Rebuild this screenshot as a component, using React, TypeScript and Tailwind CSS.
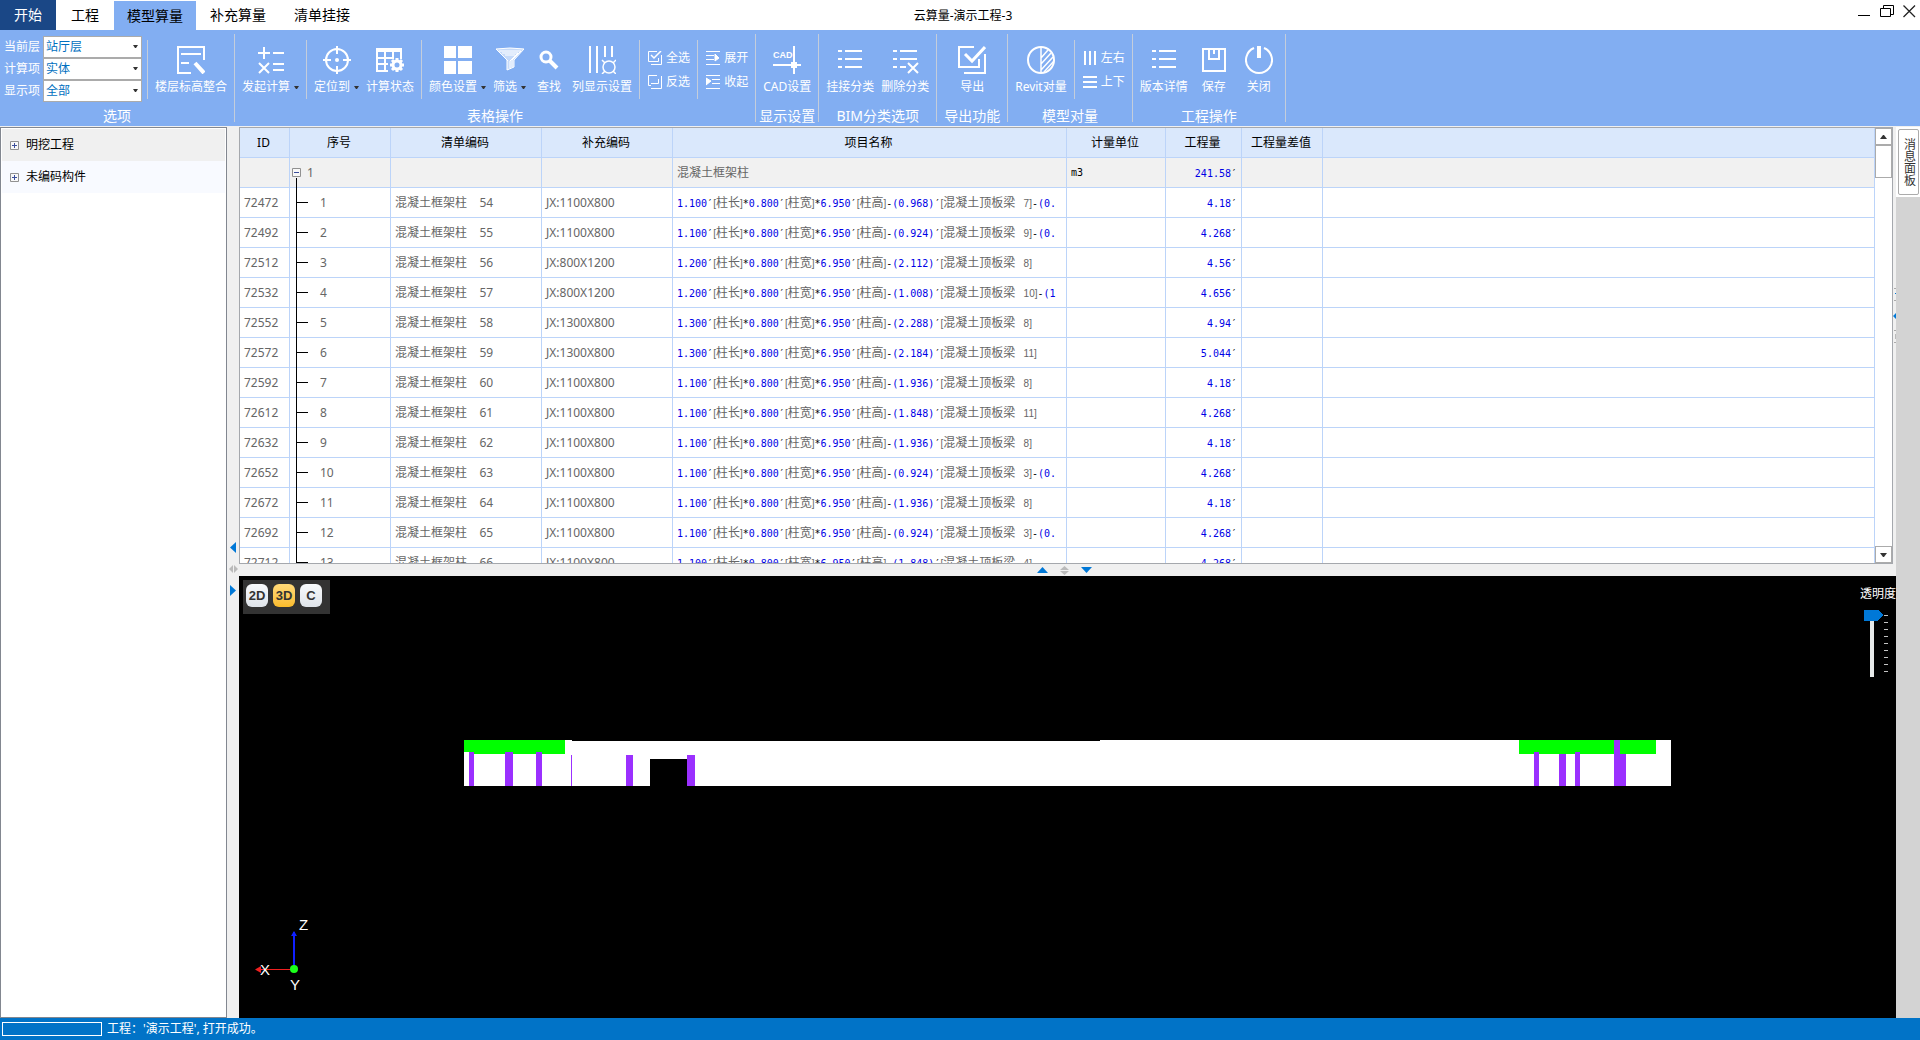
import React, { useState } from 'react';

const pisos = ['站厅层', '站台层', '顶层'];
const calculos = ['实体', '模板'];
const vistas = ['全部', '已选'];

const filas = [
  { id: '72472', n: 1, cod: 54, extra: 'JX:1100X800', f: "1.100′[柱长]*0.800′[柱宽]*6.950′[柱高]-(0.968)′[混凝土顶板梁   7]-(0.", cant: '4.18' },
  { id: '72492', n: 2, cod: 55, extra: 'JX:1100X800', f: "1.100′[柱长]*0.800′[柱宽]*6.950′[柱高]-(0.924)′[混凝土顶板梁   9]-(0.", cant: '4.268' },
  { id: '72512', n: 3, cod: 56, extra: 'JX:800X1200', f: "1.200′[柱长]*0.800′[柱宽]*6.950′[柱高]-(2.112)′[混凝土顶板梁   8]", cant: '4.56' },
  { id: '72532', n: 4, cod: 57, extra: 'JX:800X1200', f: "1.200′[柱长]*0.800′[柱宽]*6.950′[柱高]-(1.008)′[混凝土顶板梁   10]-(1", cant: '4.656' },
  { id: '72552', n: 5, cod: 58, extra: 'JX:1300X800', f: "1.300′[柱长]*0.800′[柱宽]*6.950′[柱高]-(2.288)′[混凝土顶板梁   8]", cant: '4.94' },
  { id: '72572', n: 6, cod: 59, extra: 'JX:1300X800', f: "1.300′[柱长]*0.800′[柱宽]*6.950′[柱高]-(2.184)′[混凝土顶板梁   11]", cant: '5.044' },
  { id: '72592', n: 7, cod: 60, extra: 'JX:1100X800', f: "1.100′[柱长]*0.800′[柱宽]*6.950′[柱高]-(1.936)′[混凝土顶板梁   8]", cant: '4.18' },
  { id: '72612', n: 8, cod: 61, extra: 'JX:1100X800', f: "1.100′[柱长]*0.800′[柱宽]*6.950′[柱高]-(1.848)′[混凝土顶板梁   11]", cant: '4.268' },
  { id: '72632', n: 9, cod: 62, extra: 'JX:1100X800', f: "1.100′[柱长]*0.800′[柱宽]*6.950′[柱高]-(1.936)′[混凝土顶板梁   8]", cant: '4.18' },
  { id: '72652', n: 10, cod: 63, extra: 'JX:1100X800', f: "1.100′[柱长]*0.800′[柱宽]*6.950′[柱高]-(0.924)′[混凝土顶板梁   3]-(0.", cant: '4.268' },
  { id: '72672', n: 11, cod: 64, extra: 'JX:1100X800', f: "1.100′[柱长]*0.800′[柱宽]*6.950′[柱高]-(1.936)′[混凝土顶板梁   8]", cant: '4.18' },
  { id: '72692', n: 12, cod: 65, extra: 'JX:1100X800', f: "1.100′[柱长]*0.800′[柱宽]*6.950′[柱高]-(0.924)′[混凝土顶板梁   3]-(0.", cant: '4.268' },
  { id: '72712', n: 13, cod: 66, extra: 'JX:1100X800', f: "1.100′[柱长]*0.800′[柱宽]*6.950′[柱高]-(1.848)′[混凝土顶板梁   4]", cant: '4.268' },
];

const Ico = ({ children, s = 28, w = 2 }: any) => (
  <svg width={s} height={s} viewBox={`0 0 ${s} ${s}`} fill="none" stroke="#fff" strokeWidth={w} className="shrink-0">{children}</svg>
);

const iconos = {
  piso: <Ico><path d="M14 27H1V1H27V14M4 8H24M4 17H12" /><path d="M18 17L27 27" strokeWidth="4" /></Ico>,
  calcular: <Ico><path d="M1 7H13M7 1V13M16 7H27M16 18H27M16 24H27M2 17L12 27M12 17L2 27" /></Ico>,
  ubicar: <Ico><circle cx="14" cy="14" r="11" /><path d="M14 0V8M14 20V28M0 14H8M20 14H28" /><circle cx="14" cy="14" r="2" fill="#fff" stroke="none" /></Ico>,
  estado: <Ico><path d="M12 25H1V3H25V13M1 12H17M1 18H12M9 6V25M17 6V13" /><path d="M0 4H26" strokeWidth="4" /><circle cx="21" cy="19" r="4" strokeWidth="3" /><path d="M21 12V14M21 24V26M14 19H16M26 19H28M16 14L18 16M24 22L26 24M26 14L24 16M18 22L16 24" strokeWidth="3" /></Ico>,
  color: <Ico><path d="M0 0H12V12H0ZM14 0H28V12H14ZM0 15H12V28H0ZM14 15H28V28H14Z" fill="#fff" stroke="none" /></Ico>,
  filtro: <Ico w={1}><path d="M0 3Q14 1 28 3L18 14V21L11 24V14Z" fill="#fff" fillOpacity="0.55" /><path d="M3 5H25L16 14V21M6 7H22L14 15V22M9 9H19M1 4L12 15" /></Ico>,
  buscar: <Ico><circle cx="11" cy="11" r="5" strokeWidth="3" /><path d="M15 15L22 22" strokeWidth="4" /></Ico>,
  columnas: <Ico><path d="M2 0V27M9 0V27M17 0V11M24 0V11" /><circle cx="21" cy="21" r="6" strokeWidth="1.5" /><path d="M14 14L17 17M28 14L25 17M14 28L17 25M28 28L25 25" strokeWidth="1.5" /></Ico>,
  cad: <Ico><path d="M21 0V28M0 19H28" /><path d="M18 16H24V22H18Z" fill="#fff" stroke="none" /><text x="0" y="12" fill="#fff" stroke="none" fontSize="9" fontWeight="700" fontFamily="Liberation Sans, sans-serif">CAD</text></Ico>,
  lista: <Ico><path d="M2 5H6M9 5H26M2 13H6M9 13H26M2 21H6M9 21H26" /></Ico>,
  borrar: <Ico><path d="M2 5H6M9 5H26M2 13H6M9 13H26M2 21H6M9 21H15M17 17L27 27M27 17L17 27" /></Ico>,
  exportar: <Ico><path d="M16 1H1V21H21V13M27 8V27H6" /><path d="M7 8L14 15L27 1" strokeWidth="3" /></Ico>,
  revit: <Ico><circle cx="14" cy="14" r="13" /><path d="M14 1V27M14 12L21 4M14 18L24 7M14 24L26 11M17 26L27 15" strokeWidth="1.5" /></Ico>,
  guardar: <Ico><path d="M3 3H25V25H3ZM9 3V13H19V3M14 3V8" /></Ico>,
  cerrar: <Ico><path d="M9 2A13 13 0 1 0 19 2" /><path d="M14 0V12" strokeWidth="4" /></Ico>,
  todos: <Ico s={14} w={1}><path d="M9 0.5H0.5V10.5H10.5V7M13.5 4V13.5H3" /><path d="M3 4L6 7L13 0" strokeWidth="1.5" /></Ico>,
  invertir: <Ico s={14} w={1}><path d="M9 0.5H0.5V10.5H3M3 8.5H10.5V4M13.5 1V13.5H3" /></Ico>,
  abrir: <Ico s={14} w={1}><path d="M0 0.5H14M0 4.5H8M0 8.5H8M0 13.5H14" /><path d="M9 3L13 7L9 10Z" fill="#fff" /></Ico>,
  plegar: <Ico s={14} w={1}><path d="M0 0.5H14M6 4.5H14M6 8.5H14M0 13.5H14" /><path d="M0 3L5 6L0 10Z" fill="#fff" /></Ico>,
  horizontal: <Ico s={14}><path d="M2 0V14M7 0V14M12 0V14" /></Ico>,
  vertical: <Ico s={14}><path d="M0 2H14M0 7H14M0 12H14" /></Ico>,
};

const Sep = () => <div className="w-px mt-2.5 mb-1.5 bg-[#c4cddb]" />;

function Boton({ icono, texto, flecha }: any) {
  return (
    <button type="button" className="flex flex-col items-center pt-4 min-w-8">
      {icono}
      <span className="mt-[5px] flex items-center gap-1 text-xs leading-4 whitespace-nowrap">
        {texto}
        {flecha && <svg width="5" height="3" className="fill-[#333]"><path d="M0 0H5L3 3H2Z" /></svg>}
      </span>
    </button>
  );
}

function BotonChico({ icono, texto }: any) {
  return <button type="button" className="flex items-center gap-1 h-6 text-xs leading-4 whitespace-nowrap">{icono}{texto}</button>;
}

function Grupo({ titulo, children }: any) {
  return (
    <>
      <div className="flex flex-col shrink-0">
        <div className="flex justify-center h-[75px]">{children}</div>
        <div className="px-[3px] pt-px text-sm leading-5 text-center whitespace-nowrap">{titulo}</div>
      </div>
      <div className="w-px my-1 bg-[#c4cddb]" />
    </>
  );
}

const Botones = ({ children }: any) => <div className="flex gap-[7px] px-[7px]">{children}</div>;
const Columna = ({ children }: any) => <div className="flex flex-col pt-4 pl-2 pr-[7px]">{children}</div>;

function Selector({ id, etiqueta, opciones }: any) {
  return (
    <div className="flex items-center">
      <label htmlFor={id} className="w-[39px] text-xs whitespace-nowrap">{etiqueta}</label>
      <div className="relative">
        <select id={id} className="block appearance-none w-[99px] h-[22px] pl-0.5 bg-white border border-[#ababab] text-xs text-[#0070c0] outline-none">
          {opciones.map((o: string) => <option key={o}>{o}</option>)}
        </select>
        <svg width="5" height="3" className="absolute right-1 top-[9px] fill-[#333] pointer-events-none"><path d="M0 0H5L3 3H2Z" /></svg>
      </div>
    </div>
  );
}

function Formula({ texto }: { texto: string }) {
  return (
    <span className="whitespace-pre font-['DejaVu_Sans_Mono',monospace] text-[10px] text-[#0000e6]">
      {texto.split(/(\[[^\]]*\]|[′*-])/).map((t, i) => {
        if (t.startsWith('[')) {
          return (
            <span key={i} className="font-['Liberation_Sans','Noto_Sans_CJK_SC',sans-serif] text-[#666]">
              {t.split(/([\u4e00-\u9fff]+)/).map((p, j) => (j % 2 ? <span key={j} className="text-xs">{p}</span> : p))}
            </span>
          );
        }
        return i % 2 ? <span key={i} className="text-black">{t}</span> : t;
      })}
    </span>
  );
}

const Caja = ({ abierto }: any) => (
  <svg width="9" height="9" className="shrink-0"><path d="M0.5 0.5H8.5V8.5H0.5Z" fill="#f8f8f8" stroke="#919191" /><path d={abierto ? 'M2 4.5H7' : 'M2 4.5H7M4.5 2V7'} stroke="#3c4f9b" /></svg>
);

function Tabla() {
  const celda = 'h-[30px] p-0 border-r border-b border-[#bcd4f9] overflow-hidden whitespace-nowrap';
  return (
    <table className="w-full table-fixed border-separate border-spacing-0 text-xs text-[#666]">
      <colgroup>
        <col className="w-[50px]" /><col className="w-[101px]" /><col className="w-[151px]" /><col className="w-[131px]" />
        <col className="w-[394px]" /><col className="w-[99px]" /><col className="w-[76px]" /><col className="w-[81px]" /><col />
      </colgroup>
      <thead>
        <tr className="bg-[#dae8fc] text-black">
          {['ID', '序号', '清单编码', '补充编码', '项目名称', '计量单位', '工程量', '工程量差值', ''].map((t, i) => (
            <th key={i} className={`${celda} pr-0.5 font-normal text-center`}>{t}</th>
          ))}
        </tr>
      </thead>
      <tbody>
        <tr className="bg-[#f1f1f1]">
          <td className={celda} />
          <td className="relative h-[30px] p-0 border-r border-b border-[#bcd4f9]">
            <div className="flex items-center gap-1.5 pl-0.5"><Caja abierto />1</div>
            <div className="absolute left-1.5 top-5 -bottom-px w-px bg-black" />
          </td>
          <td className={celda} /><td className={celda} />
          <td className={`${celda} pl-1`}>混凝土框架柱</td>
          <td className={`${celda} pl-1 text-black font-['DejaVu_Sans_Mono',monospace] text-[10px]`}>m3</td>
          <td className={`${celda} pr-1 text-right`}><Formula texto="241.58′" /></td>
          <td className={celda} /><td className={celda} />
        </tr>
        {filas.map(r => (
          <tr key={r.id} className="bg-white">
            <td className={`${celda} pl-1`}>{r.id}</td>
            <td className="relative h-[30px] p-0 pl-[30px] border-r border-b border-[#bcd4f9]">
              {r.n}
              <div className="absolute left-1.5 top-0 -bottom-px w-px bg-black" />
              <div className="absolute left-1.5 top-3.5 w-3 h-px bg-black" />
            </td>
            <td className={`${celda} pl-1 whitespace-pre`}>{`混凝土框架柱    ${r.cod}`}</td>
            <td className={`${celda} pl-1`}>{r.extra}</td>
            <td className={`${celda} pl-1`}><Formula texto={r.f} /></td>
            <td className={celda} />
            <td className={`${celda} pr-1 text-right`}><Formula texto={`${r.cant}′`} /></td>
            <td className={celda} /><td className={celda} />
          </tr>
        ))}
      </tbody>
    </table>
  );
}

function Visor() {
  const [modo, setModo] = useState('3D');
  return (
    <div className="relative flex-1 bg-black overflow-hidden">
      {/* modelo, alzado frontal */}
      <svg className="absolute inset-0 w-full h-full" shapeRendering="crispEdges">
        <path fill="#fff" d="M225 164H333V165H861V164H1432V210H225Z" />
        <path fill="#0f0" d="M225 164H326V178H235V176H225ZM1280 164H1417V178H1280Z" />
        <path fill="#9b30ff" d="M230 176H235V210H230ZM266 176H274V210H266ZM297 176H303V210H297ZM332 179H333V210H332ZM387 179H394V210H387ZM448 179H456V210H448ZM1295 176H1300V210H1295ZM1320 178H1327V210H1320ZM1336 176H1341V210H1336ZM1375 164H1381V178H1387V210H1375Z" />
        <path fill="#000" d="M411 183H448V210H411Z" />
      </svg>
      <svg className="absolute bottom-0 left-0" width="100" height="110" fill="#fff" fontFamily="Liberation Sans, sans-serif" fontSize="15">
        <path d="M55 24V58" stroke="#1020ff" strokeWidth="2" /><path d="M52 28L55 23L58 28Z" fill="#1020ff" />
        <path d="M20 61.5H52" stroke="#f02020" /><path d="M16 61.5L22 58V65Z" fill="#f02020" />
        <circle cx="55" cy="61" r="4" fill="#1bff1b" />
        <text x="60" y="22">Z</text><text x="21" y="67">X</text><text x="51" y="82">Y</text>
      </svg>
      <div className="absolute left-1 top-1 flex items-center gap-[5px] h-[34px] pl-[3px] pr-2 pb-1 bg-[#333]">
        {['2D', '3D', 'C'].map(m => (
          <button
            key={m}
            type="button"
            onClick={() => setModo(m)}
            className={`w-[22px] h-[23px] rounded-md text-[13px] font-bold leading-none text-[#333] font-['Liberation_Sans',sans-serif] flex items-center justify-center ${modo === m ? 'bg-gradient-to-b from-[#ffd978] to-[#fbbc28]' : 'bg-gradient-to-b from-[#f8fafc] to-[#dfe4ea]'}`}
          >
            {m}
          </button>
        ))}
      </div>
      <div className="absolute left-full top-2.5 -ml-9 text-xs leading-4 text-white whitespace-nowrap">
        <label htmlFor="opacidad">透明度</label>
        <div className="relative w-6 h-[67px] ml-1 mt-2">
          <svg width="26" height="67" shapeRendering="crispEdges">
            <path d="M6 0H10V67H6Z" fill="#e7eaea" />
            <path d="M0 0H14L19 5L14 11H0Z" fill="#0078d7" />
            <path d="M20 5.5H24M20 12.5H24M20 19.5H24M20 26.5H24M20 33.5H24M20 40.5H24M20 47.5H24M20 54.5H24M20 61.5H24" stroke="#c4c4c4" />
          </svg>
          <input id="opacidad" type="range" min="0" max="8" defaultValue="0" className="absolute inset-0 w-full h-full opacity-0 [writing-mode:vertical-lr]" />
        </div>
      </div>
    </div>
  );
}

export default function App() {
  return (
    <div className="flex flex-col h-screen overflow-hidden bg-white font-['Noto_Sans','Noto_Sans_CJK_SC',sans-serif]">
      <header className="relative flex h-[30px] shrink-0 text-sm text-black">
        <nav className="flex">
          <button type="button" className="px-3.5 bg-[#1a4786] text-white">开始</button>
          <button type="button" className="px-[15px]">工程</button>
          <button type="button" className="mt-px px-[13px] bg-[#82aef2]">模型算量</button>
          <button type="button" className="px-3.5">补充算量</button>
          <button type="button" className="px-3.5">清单挂接</button>
        </nav>
        <h1 className="absolute left-1/2 top-0 -translate-x-1/2 pl-1.5 text-xs leading-8">云算量-演示工程-3</h1>
        <div className="ml-auto flex items-start gap-[9px] pt-[5px] pr-1">
          <button type="button" aria-label="最小化"><svg width="13" height="13" stroke="#000"><path d="M0 10.5H12" /></svg></button>
          <button type="button" aria-label="还原"><svg width="14" height="13" stroke="#000" fill="none"><path d="M0.5 3.5H10.5V11.5H0.5ZM3.5 3V0.5H13.5V9.5H11" /></svg></button>
          <button type="button" aria-label="关闭窗口"><svg width="13" height="13" stroke="#222" strokeWidth="1.3"><path d="M0.5 0.5L12 12M12 0.5L0.5 12" /></svg></button>
        </div>
      </header>

      <div className="flex h-24 shrink-0 bg-[#82aef2] text-white">
        <Grupo titulo="选项">
          <div className="pl-1 pr-[5px] pt-1.5">
            <Selector id="piso" etiqueta="当前层" opciones={pisos} />
            <Selector id="calculo" etiqueta="计算项" opciones={calculos} />
            <Selector id="vista" etiqueta="显示项" opciones={vistas} />
          </div>
          <Sep />
          <Botones><Boton icono={iconos.piso} texto="楼层标高整合" /></Botones>
        </Grupo>
        <Grupo titulo="表格操作">
          <Botones><Boton icono={iconos.calcular} texto="发起计算" flecha /></Botones>
          <Sep />
          <Botones>
            <Boton icono={iconos.ubicar} texto="定位到" flecha />
            <Boton icono={iconos.estado} texto="计算状态" />
          </Botones>
          <Sep />
          <Botones>
            <Boton icono={iconos.color} texto="颜色设置" flecha />
            <Boton icono={iconos.filtro} texto="筛选" flecha />
            <Boton icono={iconos.buscar} texto="查找" />
            <Boton icono={iconos.columnas} texto="列显示设置" />
          </Botones>
          <Sep />
          <Columna>
            <BotonChico icono={iconos.todos} texto="全选" />
            <BotonChico icono={iconos.invertir} texto="反选" />
          </Columna>
          <Sep />
          <Columna>
            <BotonChico icono={iconos.abrir} texto="展开" />
            <BotonChico icono={iconos.plegar} texto="收起" />
          </Columna>
        </Grupo>
        <Grupo titulo="显示设置">
          <Botones><Boton icono={iconos.cad} texto="CAD设置" /></Botones>
        </Grupo>
        <Grupo titulo="BIM分类选项">
          <Botones>
            <Boton icono={iconos.lista} texto="挂接分类" />
            <Boton icono={iconos.borrar} texto="删除分类" />
          </Botones>
        </Grupo>
        <Grupo titulo="导出功能">
          <div className="flex px-[19px]"><Boton icono={iconos.exportar} texto="导出" /></div>
        </Grupo>
        <Grupo titulo="模型对量">
          <Botones><Boton icono={iconos.revit} texto="Revit对量" /></Botones>
          <Sep />
          <Columna>
            <BotonChico icono={iconos.horizontal} texto="左右" />
            <BotonChico icono={iconos.vertical} texto="上下" />
          </Columna>
        </Grupo>
        <Grupo titulo="工程操作">
          <Botones>
            <Boton icono={iconos.lista} texto="版本详情" />
            <div className="flex px-[3px]"><Boton icono={iconos.guardar} texto="保存" /></div>
            <div className="flex px-[3px]"><Boton icono={iconos.cerrar} texto="关闭" /></div>
          </Botones>
        </Grupo>
      </div>

      <div className="flex flex-1 min-h-0 pt-px bg-[#f0f0f0]">
        <aside className="w-[227px] shrink-0 border border-[#828790] bg-white p-px text-xs text-black">
          <ul>
            <li className="flex items-center gap-[7px] h-8 pl-2 bg-[#f0f0f0]"><Caja />明挖工程</li>
            <li className="flex items-center gap-[7px] h-8 pl-2 bg-[#f8faff]"><Caja />未编码构件</li>
          </ul>
        </aside>

        <div className="flex flex-col items-center justify-center gap-3 w-3 pb-2 shrink-0">
          <svg width="6" height="11" fill="#0078d7"><path d="M6 0V11L0 5.5Z" /></svg>
          <svg width="9" height="8" fill="#bababa"><path d="M4 0V8L0 4ZM5 0V8L9 4Z" /></svg>
          <svg width="6" height="11" fill="#0078d7"><path d="M0 0V11L6 5.5Z" /></svg>
        </div>

        <main className="flex flex-col flex-1 min-w-0">
          <div className="flex h-[437px] shrink-0">
            <div className="flex flex-1 min-w-0 border border-[#a5a8ad] bg-white overflow-hidden">
              <div className="flex-1 min-w-0 overflow-hidden"><Tabla /></div>
              <div className="flex flex-col w-[17px] shrink-0">
                <button type="button" aria-label="向上滚动" className="flex items-center justify-center h-[17px] border border-[#ababab]">
                  <svg width="7" height="4" className="fill-[#333]"><path d="M0 4L3 0H4L7 4Z" /></svg>
                </button>
                <div className="h-[33px] border border-[#ababab]" />
                <button type="button" aria-label="向下滚动" className="mt-auto flex items-center justify-center h-[17px] border border-[#ababab]">
                  <svg width="7" height="4" className="fill-[#333]"><path d="M0 0L3 4H4L7 0Z" /></svg>
                </button>
              </div>
            </div>
            <div className="w-[3px] pt-40">
              <svg width="3" height="56"><path d="M1 1.5H3M1 13.5H3M1 43.5H3M1 55.5H3" stroke="#ababab" /><path d="M3 26V32L0 29ZM2 6H3V7H2Z" fill="#0078d7" /><path d="M2 47H3V52H2Z" fill="#bababa" /></svg>
            </div>
          </div>
          <div className="flex items-center justify-center gap-3 h-3 pr-1.5 shrink-0">
            <svg width="11" height="6" fill="#0078d7"><path d="M0 6H11L5.5 0Z" /></svg>
            <svg width="9" height="9" fill="#bababa"><path d="M0 4H9L4.5 0ZM0 5H9L4.5 9Z" /></svg>
            <svg width="11" height="6" fill="#0078d7"><path d="M0 0H11L5.5 6Z" /></svg>
          </div>
          <Visor />
        </main>

        <div className="w-6 shrink-0 bg-[#d3d3d3]">
          <div className="h-[70px] pt-0.5 pl-0.5 pr-px bg-white">
            <button type="button" className="flex items-center justify-center w-full h-[66px] border border-[#ababab] rounded-xs text-xs leading-4 text-[#333] [writing-mode:vertical-rl]">消息面板</button>
          </div>
        </div>
      </div>

      <footer className="flex items-center gap-[5px] h-[22px] shrink-0 pl-0.5 bg-[#0173c7] text-xs text-white">
        <div className="w-[100px] h-3.5 border border-white" />
        <span>工程：'演示工程', 打开成功。</span>
      </footer>
    </div>
  );
}
